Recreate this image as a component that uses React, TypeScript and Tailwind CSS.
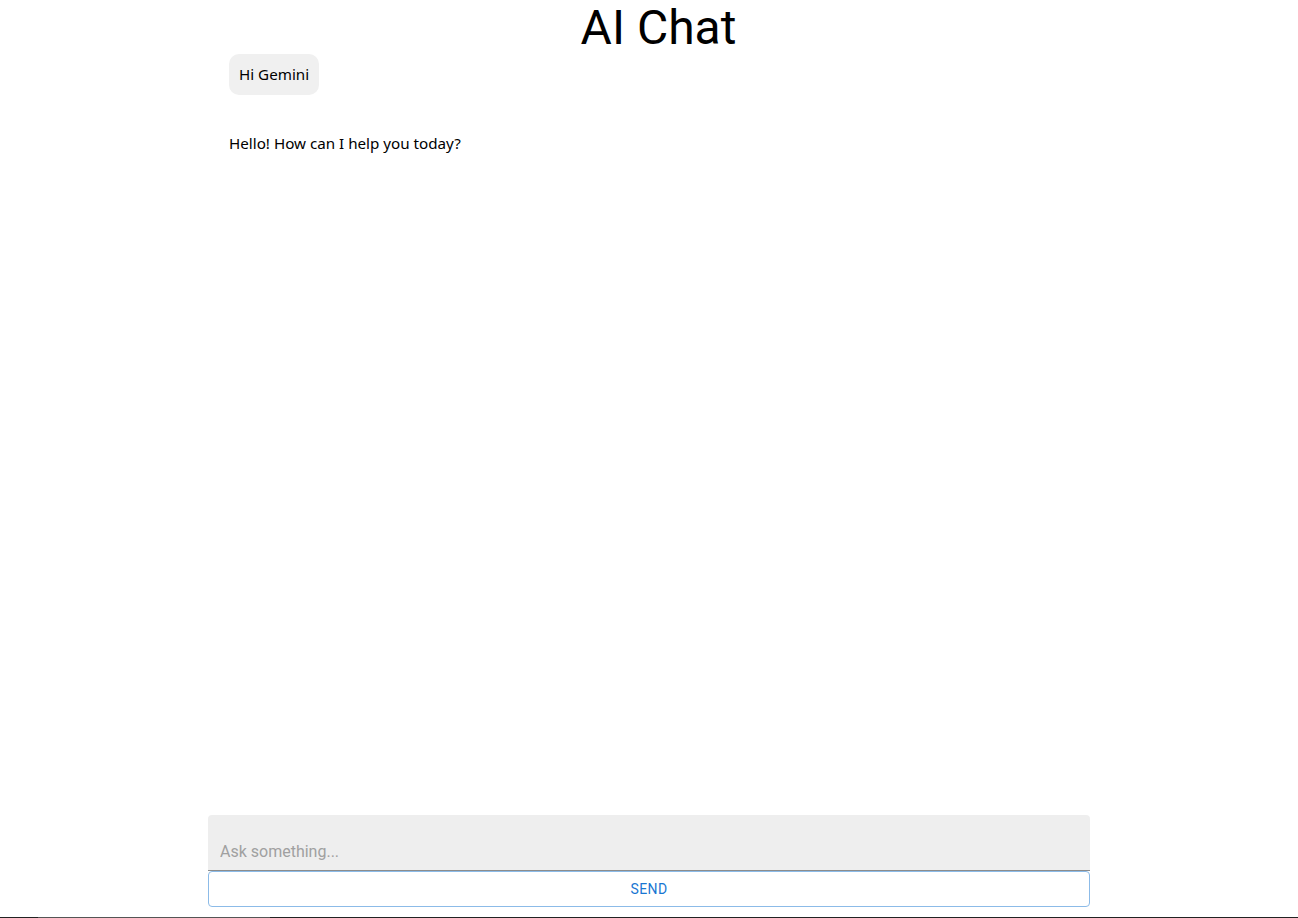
import { useState } from 'react'

const messages = [
  { id: 1, role: 'user', text: 'Hi Gemini' },
  { id: 2, role: 'model', text: 'Hello! How can I help you today?' },
]

export default function App() {
  const [input, setInput] = useState('')

  return (
    <div className="flex h-screen flex-col bg-white text-black">
      <h1 className="h-[54px] pl-[19px] text-center font-['Roboto',sans-serif] text-[48px] leading-[56px] font-normal">
        AI Chat
      </h1>

      <div className="mx-auto flex w-[882px] flex-1 flex-col items-start px-[21px] font-['Noto_Sans',sans-serif] text-[15.2px]">
        {messages.map((m) =>
          m.role === 'user' ? (
            <div key={m.id} className="rounded-[10px] bg-[#f0f0f0] px-[10px] py-[10px] leading-[21px]">
              {m.text}
            </div>
          ) : (
            <div key={m.id} className="mt-[28px] py-[10px] leading-[21px]">
              {m.text}
            </div>
          )
        )}
      </div>

      <div className="mx-auto mb-[10px] flex w-[882px] flex-col font-['Roboto',sans-serif]">
        <div className="h-[56px] rounded-t-[4px] border-b border-[#8c8c8c] bg-[#eeeeee]">
          <input
            value={input}
            onChange={(e) => setInput(e.target.value)}
            placeholder="Ask something..."
            className="h-full w-full bg-transparent px-[12px] pt-[25px] pb-[8px] text-[16px] outline-none placeholder:text-[#a0a0a0]"
          />
        </div>
        <button className="h-[36px] rounded-[4px] border border-[#8cbbe8] bg-white text-[14px] font-normal tracking-[0.4px] text-[#1976d2]">
          SEND
        </button>
      </div>

      <div className="flex h-px w-full">
        <div className="w-[38px] bg-[#222]" />
        <div className="w-[232px] bg-[#555]" />
        <div className="flex-1 bg-[#222]" />
      </div>
    </div>
  )
}
